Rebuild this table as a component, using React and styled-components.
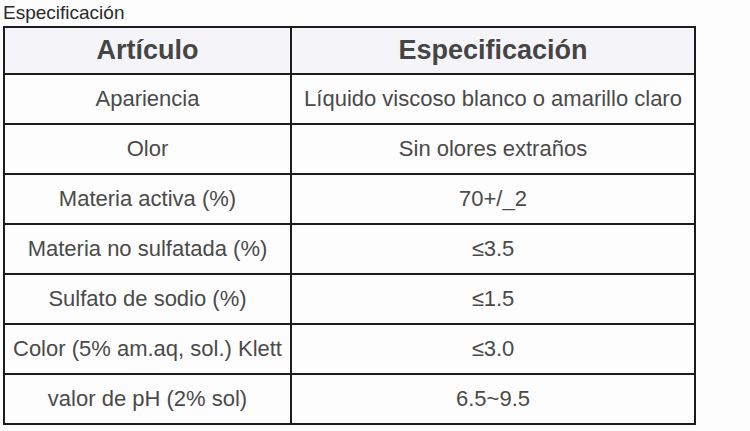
import React from "react";
import styled, { createGlobalStyle } from "styled-components";

const GlobalStyle = createGlobalStyle`
  html, body {
    margin: 0;
    padding: 0;
    background: #fdfdfd;
  }
  body {
    font-family: "Liberation Sans", Arial, sans-serif;
  }
`;

const Page = styled.div`
  width: 750px;
  height: 431px;
  padding-left: 3px;
  box-sizing: border-box;
  background: #fdfdfd;
  overflow: hidden;
`;

const Title = styled.div`
  height: 26px;
  box-sizing: border-box;
  padding-top: 2px;
  padding-left: 0;
  font-size: 19px;
  line-height: 22px;
  color: #2a2a2a;
`;

const Table = styled.table`
  border-collapse: collapse;
  table-layout: fixed;
  width: 691px;
  color: #4a4a4a;
`;

const Col = styled.col`
  width: ${(p) => p.$w}px;
`;

const HeadCell = styled.th`
  border: 2px solid #1c1c1c;
  background: #f5f5f9;
  height: 45px;
  padding: 0;
  font-size: 27px;
  font-weight: bold;
  text-align: center;
  vertical-align: middle;
  color: #454545;
`;

const Cell = styled.td`
  border: 2px solid #1c1c1c;
  background: #fdfdfd;
  height: 48px;
  padding: 0;
  font-size: 22px;
  text-align: center;
  vertical-align: middle;
  white-space: nowrap;
`;

const rows = [
  ["Apariencia", "Líquido viscoso blanco o amarillo claro"],
  ["Olor", "Sin olores extraños"],
  ["Materia activa (%)", "70+/_2"],
  ["Materia no sulfatada (%)", "≤3.5"],
  ["Sulfato de sodio (%)", "≤1.5"],
  ["Color (5% am.aq, sol.) Klett", "≤3.0"],
  ["valor de pH (2% sol)", "6.5~9.5"],
];

export default function App() {
  return (
    <>
      <GlobalStyle />
      <Page>
        <Title>Especificación</Title>
        <Table>
          <colgroup>
            <Col $w={287} />
            <Col $w={404} />
          </colgroup>
          <thead>
            <tr>
              <HeadCell>Artículo</HeadCell>
              <HeadCell>Especificación</HeadCell>
            </tr>
          </thead>
          <tbody>
            {rows.map(([a, b]) => (
              <tr key={a}>
                <Cell>{a}</Cell>
                <Cell>{b}</Cell>
              </tr>
            ))}
          </tbody>
        </Table>
      </Page>
    </>
  );
}
